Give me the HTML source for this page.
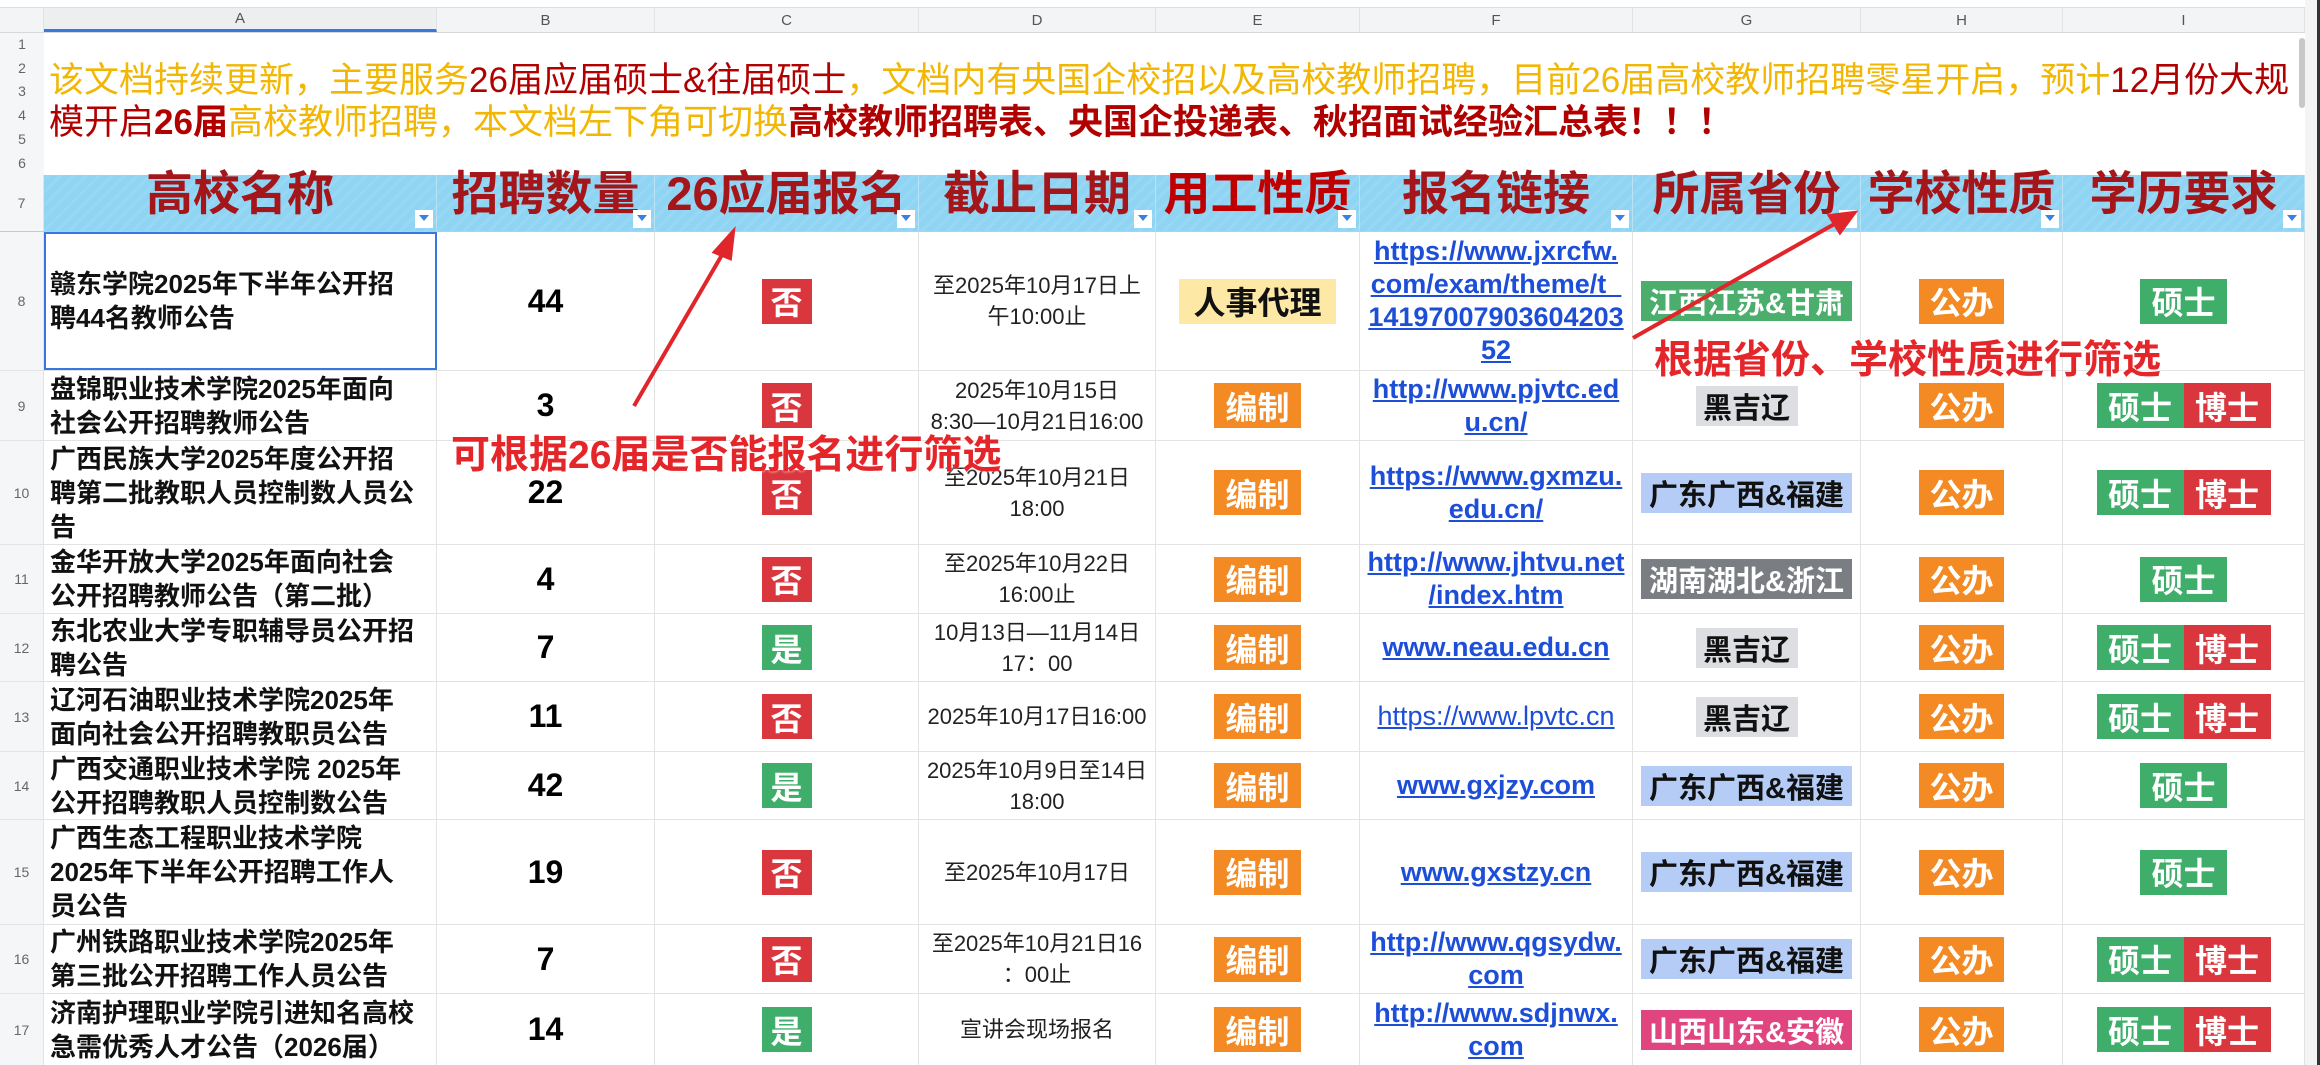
<!DOCTYPE html>
<html><head><meta charset="utf-8"><style>
*{margin:0;padding:0;box-sizing:border-box}
body{width:2320px;height:1065px;overflow:hidden;background:#fff;position:relative;font-family:"Liberation Sans","Noto Sans CJK SC",sans-serif}
.a{position:absolute}
.r{position:absolute;left:0;width:2305px;border-bottom:1px solid #e3e3e3}
.c{position:absolute;top:0;height:100%;display:flex;align-items:center;justify-content:center;text-align:center;border-right:1px solid #e3e3e3}
.n{left:0;width:44px;background:#f5f6f7;color:#666;font-size:14px}
.A{left:44px;width:393px;justify-content:flex-start;text-align:left;padding-left:6px;font-weight:bold;font-size:26px;line-height:34px;color:#111}
.B{left:437px;width:218px;font-weight:bold;font-size:32px}
.C{left:655px;width:264px}
.D{left:919px;width:237px;font-size:22px;line-height:31px;color:#222}
.E{left:1156px;width:204px}
.F{left:1360px;width:273px;font-weight:bold;font-size:27px;line-height:33px}
.F span{color:#1d4ed8;text-decoration:underline}
.G{left:1633px;width:228px}
.H{left:1861px;width:202px}
.I{left:2063px;width:242px}
.b{display:inline-flex;align-items:center;justify-content:center;color:#fff;font-weight:bold;height:45px;white-space:nowrap}
.no{background:#d9363e;width:50px;font-size:32px}
.yes{background:#3fae6a;width:50px;font-size:32px}
.bz{background:#f38a24;width:87px;font-size:32px}
.gb{background:#f38a24;width:85px;font-size:32px}
.ss{background:#3fae6a;width:87px;font-size:32px}
.bs{background:#d9363e;width:87px;font-size:32px}
.p{height:40px;font-size:29px}
.gray{background:#dcdee2;color:#111;width:102px}
.blue{background:#b5cdf6;color:#111;width:211px}
.green{background:#4bae6c;width:211px}
.dg{background:#7a7e83;width:211px}
.pink{background:#e0457f;width:211px}
.hd .c{color:#a5161a;font-weight:bold;font-size:47px;align-items:flex-start;line-height:50px;border-right:1px solid #b9e3f5}
.hd .c b{margin-top:-6px;font-weight:bold}
.f{position:absolute;right:3px;bottom:3px;width:18px;height:18px;background:#fff}
.f:after{content:"";position:absolute;left:4px;top:5px;border-left:5px solid transparent;border-right:5px solid transparent;border-top:6px solid #3b7fe0}
.ch .c{font-size:15px;color:#555;background:#f3f4f5}
</style></head><body>
<div class="a" style="left:0;top:0;width:2305px;height:8px;border-bottom:1px solid #ddd"></div>
<div class="r ch" style="top:8px;height:25px;border-bottom:1px solid #d8d8d8">
<div class="c" style="left:0;width:44px;background:#f3f4f5"></div>
<div class="c" style="left:44px;width:393px;border-bottom:3px solid #3a76e0;background:#eceef0">A</div>
<div class="c" style="left:437px;width:218px">B</div>
<div class="c" style="left:655px;width:264px">C</div>
<div class="c" style="left:919px;width:237px">D</div>
<div class="c" style="left:1156px;width:204px">E</div>
<div class="c" style="left:1360px;width:273px">F</div>
<div class="c" style="left:1633px;width:228px">G</div>
<div class="c" style="left:1861px;width:202px">H</div>
<div class="c" style="left:2063px;width:242px">I</div>
</div>
<div class="a" style="left:0;top:33px;width:44px;height:142px;background:#f5f6f7"></div>
<div class="a" style="left:0;top:33px;width:44px;font-size:14px;color:#666;line-height:23.7px;text-align:center">1<br>2<br>3<br>4<br>5<br>6</div>
<div class="a" style="left:49px;top:60px;font-size:35px;line-height:42px;white-space:nowrap;color:#f2b705">该文档持续更新，主要服务<span style="color:#b00000">26届应届硕士&amp;往届硕士</span>，文档内有央国企校招以及高校教师招聘，目前26届高校教师招聘零星开启，预计<span style="color:#b00000">12月份大规</span><br><span style="color:#b00000">模开启<b>26届</b></span>高校教师招聘，本文档左下角可切换<b style="color:#b00000">高校教师招聘表、央国企投递表、秋招面试经验汇总表！！！</b></div>
<div class="r hd" style="top:175px;height:57px;background:repeating-linear-gradient(135deg,#8fd4f2 0 6px,#98d8f4 6px 9px);border-bottom:1px solid #9dd">
<div class="c n" style="border-right:1px solid #e3e3e3;color:#666;font-size:14px;font-weight:normal;align-items:center;padding:0">7</div>
<div class="c" style="left:44px;width:393px"><b>高校名称</b><i class="f"></i></div>
<div class="c" style="left:437px;width:218px"><b>招聘数量</b><i class="f"></i></div>
<div class="c" style="left:655px;width:264px"><b>26应届报名</b><i class="f"></i></div>
<div class="c" style="left:919px;width:237px"><b>截止日期</b><i class="f"></i></div>
<div class="c" style="left:1156px;width:204px;color:#c00000"><b>用工性质</b><i class="f"></i></div>
<div class="c" style="left:1360px;width:273px"><b>报名链接</b><i class="f"></i></div>
<div class="c" style="left:1633px;width:228px"><b>所属省份</b><i class="f"></i></div>
<div class="c" style="left:1861px;width:202px"><b>学校性质</b><i class="f"></i></div>
<div class="c" style="left:2063px;width:242px"><b>学历要求</b><i class="f"></i></div>
</div>

<div class="r" style="top:232px;height:139px"><div class="c n">8</div><div class="c A" style="outline:2px solid #3a76e0;outline-offset:-2px">赣东学院2025年下半年公开招<br>聘44名教师公告</div><div class="c B">44</div><div class="c C"><span class="b no">否</span></div><div class="c D">至2025年10月17日上<br>午10:00止</div><div class="c E"><span class="b" style="background:#fde8a6;color:#111;width:157px;font-size:32px">人事代理</span></div><div class="c F"><span>https://www.jxrcfw.<br>com/exam/theme/t_<br>14197007903604203<br>52</span></div><div class="c G"><span class="b p green">江西江苏&amp;甘肃</span></div><div class="c H"><span class="b gb">公办</span></div><div class="c I"><span class="b ss">硕士</span></div></div>

<div class="r" style="top:371px;height:70px"><div class="c n">9</div><div class="c A">盘锦职业技术学院2025年面向<br>社会公开招聘教师公告</div><div class="c B">3</div><div class="c C"><span class="b no">否</span></div><div class="c D">2025年10月15日<br>8:30—10月21日16:00</div><div class="c E"><span class="b bz">编制</span></div><div class="c F"><span>http://www.pjvtc.ed<br>u.cn/</span></div><div class="c G"><span class="b p gray">黑吉辽</span></div><div class="c H"><span class="b gb">公办</span></div><div class="c I"><span class="b ss">硕士</span><span class="b bs">博士</span></div></div>

<div class="r" style="top:441px;height:104px"><div class="c n">10</div><div class="c A">广西民族大学2025年度公开招<br>聘第二批教职人员控制数人员公<br>告</div><div class="c B">22</div><div class="c C"><span class="b no">否</span></div><div class="c D">至2025年10月21日<br>18:00</div><div class="c E"><span class="b bz">编制</span></div><div class="c F"><span>https://www.gxmzu.<br>edu.cn/</span></div><div class="c G"><span class="b p blue">广东广西&amp;福建</span></div><div class="c H"><span class="b gb">公办</span></div><div class="c I"><span class="b ss">硕士</span><span class="b bs">博士</span></div></div>

<div class="r" style="top:545px;height:69px"><div class="c n">11</div><div class="c A">金华开放大学2025年面向社会<br>公开招聘教师公告（第二批）</div><div class="c B">4</div><div class="c C"><span class="b no">否</span></div><div class="c D">至2025年10月22日<br>16:00止</div><div class="c E"><span class="b bz">编制</span></div><div class="c F"><span>http://www.jhtvu.net<br>/index.htm</span></div><div class="c G"><span class="b p dg">湖南湖北&amp;浙江</span></div><div class="c H"><span class="b gb">公办</span></div><div class="c I"><span class="b ss">硕士</span></div></div>

<div class="r" style="top:614px;height:68px"><div class="c n">12</div><div class="c A">东北农业大学专职辅导员公开招<br>聘公告</div><div class="c B">7</div><div class="c C"><span class="b yes">是</span></div><div class="c D">10月13日—11月14日<br>17：00</div><div class="c E"><span class="b bz">编制</span></div><div class="c F"><span>www.neau.edu.cn</span></div><div class="c G"><span class="b p gray">黑吉辽</span></div><div class="c H"><span class="b gb">公办</span></div><div class="c I"><span class="b ss">硕士</span><span class="b bs">博士</span></div></div>

<div class="r" style="top:682px;height:70px"><div class="c n">13</div><div class="c A">辽河石油职业技术学院2025年<br>面向社会公开招聘教职员公告</div><div class="c B">11</div><div class="c C"><span class="b no">否</span></div><div class="c D">2025年10月17日16:00</div><div class="c E"><span class="b bz">编制</span></div><div class="c F" style="font-weight:normal"><span>https://www.lpvtc.cn</span></div><div class="c G"><span class="b p gray">黑吉辽</span></div><div class="c H"><span class="b gb">公办</span></div><div class="c I"><span class="b ss">硕士</span><span class="b bs">博士</span></div></div>

<div class="r" style="top:752px;height:68px"><div class="c n">14</div><div class="c A">广西交通职业技术学院 2025年<br>公开招聘教职人员控制数公告</div><div class="c B">42</div><div class="c C"><span class="b yes">是</span></div><div class="c D">2025年10月9日至14日<br>18:00</div><div class="c E"><span class="b bz">编制</span></div><div class="c F"><span>www.gxjzy.com</span></div><div class="c G"><span class="b p blue">广东广西&amp;福建</span></div><div class="c H"><span class="b gb">公办</span></div><div class="c I"><span class="b ss">硕士</span></div></div>

<div class="r" style="top:820px;height:105px"><div class="c n">15</div><div class="c A">广西生态工程职业技术学院<br>2025年下半年公开招聘工作人<br>员公告</div><div class="c B">19</div><div class="c C"><span class="b no">否</span></div><div class="c D">至2025年10月17日</div><div class="c E"><span class="b bz">编制</span></div><div class="c F"><span>www.gxstzy.cn</span></div><div class="c G"><span class="b p blue">广东广西&amp;福建</span></div><div class="c H"><span class="b gb">公办</span></div><div class="c I"><span class="b ss">硕士</span></div></div>

<div class="r" style="top:925px;height:69px"><div class="c n">16</div><div class="c A">广州铁路职业技术学院2025年<br>第三批公开招聘工作人员公告</div><div class="c B">7</div><div class="c C"><span class="b no">否</span></div><div class="c D">至2025年10月21日16<br>：00止</div><div class="c E"><span class="b bz">编制</span></div><div class="c F"><span>http://www.qgsydw.<br>com</span></div><div class="c G"><span class="b p blue">广东广西&amp;福建</span></div><div class="c H"><span class="b gb">公办</span></div><div class="c I"><span class="b ss">硕士</span><span class="b bs">博士</span></div></div>

<div class="r" style="top:994px;height:71px;border:none"><div class="c n">17</div><div class="c A">济南护理职业学院引进知名高校<br>急需优秀人才公告（2026届）</div><div class="c B">14</div><div class="c C"><span class="b yes">是</span></div><div class="c D">宣讲会现场报名</div><div class="c E"><span class="b bz">编制</span></div><div class="c F"><span>http://www.sdjnwx.<br>com</span></div><div class="c G"><span class="b p pink">山西山东&amp;安徽</span></div><div class="c H"><span class="b gb">公办</span></div><div class="c I"><span class="b ss">硕士</span><span class="b bs">博士</span></div></div>

<div class="a" style="left:2305px;top:0;width:15px;height:1065px;background:#f4f4f4"></div>
<div class="a" style="left:2299px;top:38px;width:6px;height:70px;background:#c8c8c8;border-radius:3px"></div>
<div class="a" style="left:2317px;top:0;width:3px;height:1065px;background:#333"></div>

<svg class="a" style="left:0;top:0" width="2320" height="1065">
<g stroke="#e0262a" stroke-width="4" fill="#e0262a">
<line x1="634" y1="406" x2="726" y2="248"/>
<polygon points="733,232 715,252 730,258"/>
<line x1="1633" y1="338" x2="1838" y2="222"/>
<polygon points="1854,213 1830,216 1840,232"/>
</g>
</svg>
<div class="a" style="left:451px;top:424px;font-size:39px;font-weight:bold;color:#e4262b;white-space:nowrap;text-shadow:0 0 3px #fff">可根据26届是否能报名进行筛选</div>
<div class="a" style="left:1654px;top:329px;font-size:39px;font-weight:bold;color:#e4262b;white-space:nowrap;text-shadow:0 0 3px #fff">根据省份、学校性质进行筛选</div>
</body></html>
